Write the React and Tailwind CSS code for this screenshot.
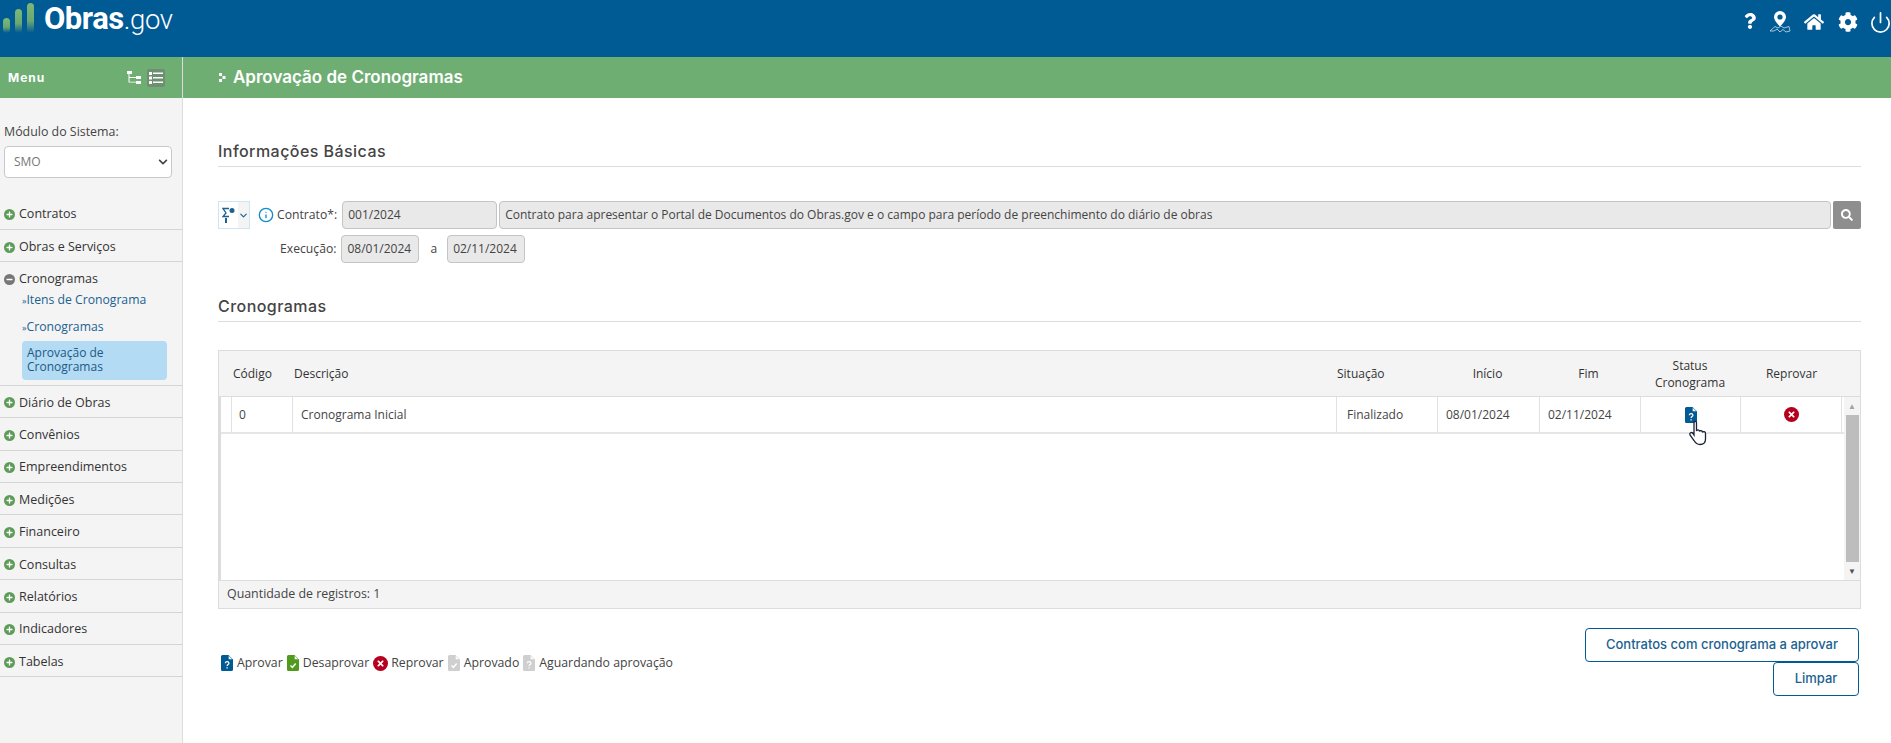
import { FaHome, FaCog, FaQuestion, FaChevronDown, FaSearch, FaTimes, FaPlus, FaMinus } from 'react-icons/fa';
import { Power, Info, ChevronDown } from 'lucide-react';

const openSans = { fontFamily: '"Open Sans", sans-serif' };

const menuTop = ['Contratos', 'Obras e Serviços'];
const menuBottom = ['Diário de Obras', 'Convênios', 'Empreendimentos', 'Medições', 'Financeiro', 'Consultas', 'Relatórios', 'Indicadores', 'Tabelas'];
const legend = [
  { label: 'Aprovar', type: 'doc', color: '#005a94', mark: '?' },
  { label: 'Desaprovar', type: 'doc', color: '#4f9a1f', mark: '✓' },
  { label: 'Reprovar', type: 'x' },
  { label: 'Aprovado', type: 'doc', color: '#cfcfcf', mark: '✓' },
  { label: 'Aguardando aprovação', type: 'doc', color: '#cfcfcf', mark: '?' },
];

function DocIcon({ color, mark, className }) {
  return (
    <svg viewBox="0 0 12 16" className={className}>
      <path d="M1.5 0H7.5L12 4.5V14.5A1.5 1.5 0 0 1 10.5 16H1.5A1.5 1.5 0 0 1 0 14.5V1.5A1.5 1.5 0 0 1 1.5 0Z" fill={color} />
      <path d="M7.7 0.8L11.2 4.3H7.7Z" fill="#fff" />
      {mark === '?' ? (
        <path d="M4.3 8.2C4.4 6.2 7.9 6.2 7.9 8.2C7.9 9.6 6.1 9.6 6.1 11M6.1 12.2V13.6" stroke="#fff" strokeWidth="1.3" fill="none" />
      ) : (
        <path d="M3.5 10.5L5.4 12.5L8.7 8.6" stroke="#fff" strokeWidth="1.5" fill="none" />
      )}
    </svg>
  );
}

function RejectIcon({ className }) {
  return (
    <span className={`inline-flex items-center justify-center rounded-full bg-[#b5001f] text-white ${className}`}>
      <FaTimes className="w-[9px] h-[9px]" />
    </span>
  );
}

function MenuItem({ label }) {
  return (
    <div className="h-[32.4px] pt-[3px] border-b border-[#d4d4d4] flex items-center pl-[4px] gap-[3px] text-[12.5px] text-[#333]">
      <span className="w-[11px] h-[11px] rounded-full flex items-center justify-center text-white bg-[#5d9c59]">
        <FaPlus className="w-[7px] h-[7px]" />
      </span>
      <span className="ml-[1px]">{label}</span>
    </div>
  );
}

function Field({ className, children }) {
  return (
    <div className={`h-[28px] bg-[#e9e9e9] border border-[#c4c4c4] rounded-[4px] flex items-center px-[5px] text-[12px] text-[#444] ${className}`}>
      {children}
    </div>
  );
}

function Cell({ className, children }) {
  return <div className={`flex items-center border-r border-[#e2e2e2] text-[12px] text-[#444] ${className}`}>{children}</div>;
}

function SectionTitle({ children, className }) {
  return (
    <div className={`border-b border-[#dcdcdc] h-[27px] text-[16px] leading-[23px] font-medium tracking-[0.45px] text-[#444] ${className}`} style={{ fontFamily: 'Inter, sans-serif' }}>
      {children}
    </div>
  );
}

export default function App() {
  return (
    <div className="h-[743px] bg-white flex flex-col overflow-hidden" style={openSans}>
      <header className="h-[57px] shrink-0 bg-[#005a94] flex justify-between">
        <div className="flex items-start pl-[3px] pt-[3px]">
          <svg width="32" height="30" viewBox="0 0 32 30">
            <defs>
              <linearGradient id="bar" x1="0" y1="0" x2="0" y2="1">
                <stop offset="0" stopColor="#7cb878" />
                <stop offset="0.6" stopColor="#6aa872" />
                <stop offset="1" stopColor="#005a94" />
              </linearGradient>
            </defs>
            <rect x="0" y="15" width="7" height="15" rx="3.5" fill="url(#bar)" />
            <rect x="12" y="6" width="7" height="24" rx="3.5" fill="url(#bar)" />
            <rect x="24" y="0" width="7" height="30" rx="3.5" fill="url(#bar)" />
          </svg>
          <div className="ml-[9px] -mt-[4px] leading-[40px] text-white" style={{ fontFamily: 'Roboto, sans-serif' }}>
            <span className="text-[31px] font-bold tracking-[-0.5px]">Obras</span>
            <span className="text-[27.5px] font-light tracking-[-0.3px]">.gov</span>
          </div>
        </div>
        <div className="flex items-start pt-[11px] text-white">
          <FaQuestion className="w-[12px] h-[18px] mt-[1px] mr-[13px]" />
          <svg width="22" height="22" viewBox="0 0 22 22" className="mr-[13px]">
            <path fillRule="evenodd" d="M11 0A6 6 0 0 0 5 6C5 10 11 15.5 11 15.5S17 10 17 6A6 6 0 0 0 11 0ZM11 3.4A2.6 2.6 0 1 1 11 8.6A2.6 2.6 0 0 1 11 3.4Z" fill="#fff" />
            <path d="M1 20L6 15.5L9 17L12 15L15 17L20 15.5L21 20L17 21L14 18.5L11 21L8 18L5 20Z" fill="none" stroke="#cfe0ea" strokeWidth="0.8" />
          </svg>
          <FaHome className="w-[20px] h-[20px] mt-[1px] mr-[14px]" />
          <FaCog className="w-[20px] h-[20px] mt-[1px] mr-[11px]" />
          <Power className="w-[23px] h-[23px] -mr-[1px]" strokeWidth={1.8} />
        </div>
      </header>

      <div className="flex flex-1 min-h-0">
        <aside className="w-[183px] shrink-0 bg-[#f4f4f4] border-r border-[#dcdcdc] flex flex-col">
          <div className="h-[41px] bg-[#6fae73] flex items-center justify-between pl-[8px] pr-[17px]">
            <span className="text-[12px] font-bold tracking-[1px] text-white" style={{ fontFamily: 'Inter, sans-serif' }}>Menu</span>
            <div className="flex items-center gap-[6px]">
              <svg width="14" height="13" viewBox="0 0 14 13" fill="#fff">
                <rect x="0" y="0" width="5" height="3" />
                <rect x="9" y="5" width="5" height="3" />
                <rect x="9" y="10" width="5" height="3" />
                <path d="M1.5 3V11.5H9V10.7H2.5V6.9H9V6.1H2.5V3Z" />
              </svg>
              <span className="w-[18px] h-[18px] rounded-[2px] bg-[#6f8f72] flex items-center justify-center">
                <svg width="14" height="12" viewBox="0 0 14 12" fill="#fff">
                  <rect x="0" y="0" width="3" height="3" />
                  <rect x="4" y="0.5" width="10" height="1.5" />
                  <rect x="0" y="4.5" width="3" height="3" />
                  <rect x="4" y="5" width="10" height="1.5" />
                  <rect x="0" y="9" width="3" height="3" />
                  <rect x="4" y="9.5" width="10" height="1.5" />
                </svg>
              </span>
            </div>
          </div>

          <div className="pt-[26px] px-[4px]">
            <div className="text-[12.4px] leading-[16px] text-[#444]">Módulo do Sistema:</div>
            <div className="mt-[6px] h-[32px] w-[168px] bg-white border border-[#c9c9c9] rounded-[4px] flex items-center justify-between pl-[9px] pr-[3px] text-[12px] text-[#777]">
              <span>SMO</span>
              <FaChevronDown className="w-[10px] h-[10px] text-[#444]" />
            </div>
          </div>

          <div className="mt-[19.5px]">
            {menuTop.map(label => <MenuItem key={label} label={label} />)}
            <div className="border-b border-[#d4d4d4] pb-[5px]">
              <div className="h-[32px] pt-[3px] flex items-center pl-[4px] gap-[3px] text-[12.5px] text-[#333]">
                <span className="w-[11px] h-[11px] rounded-full flex items-center justify-center text-white bg-[#777]">
                  <FaMinus className="w-[7px] h-[7px]" />
                </span>
                <span className="ml-[1px]">Cronogramas</span>
              </div>
              <div className="-mt-[5px] pl-[22px] text-[12.2px] text-[#1b6291]">
                <div className="leading-[22px]"><span className="text-[9px]">»</span>Itens de Cronograma</div>
                <div className="mt-[4px] leading-[22px]"><span className="text-[9px]">»</span>Cronogramas</div>
              </div>
              <div className="ml-[22px] mt-[1.5px] w-[145px] h-[39px] bg-[#b3dbf4] rounded-[4px] px-[5px] py-[5px] text-[12px] leading-[14px] text-[#1b5a85]">
                Aprovação de Cronogramas
              </div>
            </div>
            {menuBottom.map(label => <MenuItem key={label} label={label} />)}
          </div>
        </aside>

        <main className="flex-1 min-w-0 flex flex-col">
          <div className="h-[41px] shrink-0 bg-[#6fae73] flex items-center pl-[36px] gap-[7px] text-white">
            <svg width="7" height="9" viewBox="0 0 7 9" fill="#fff">
              <rect x="0" y="0" width="3" height="3" />
              <rect x="3.5" y="3" width="3" height="3" />
              <rect x="0" y="6" width="3" height="3" />
            </svg>
            <span className="text-[17px] font-semibold" style={{ fontFamily: 'Inter, sans-serif' }}>Aprovação de Cronogramas</span>
          </div>

          <div className="pl-[35px] pr-[30px] flex flex-col">
            <SectionTitle className="mt-[42px]">Informações Básicas</SectionTitle>

            <div className="mt-[34px] flex items-center h-[28px]">
              <div className="w-[32px] h-[28px] border border-[#cde6f5] flex">
                <div className="w-[21px] flex items-center justify-center">
                  <svg width="13" height="16" viewBox="0 0 13 16" fill="none" stroke="#1b6291" strokeWidth="1.3">
                    <path d="M7 1.5H1L4 6L1 9.5H7" />
                    <path d="M4 11V16" strokeWidth="2" />
                    <circle cx="10" cy="3.5" r="2.5" fill="#1b6291" stroke="none" />
                  </svg>
                </div>
                <div className="flex-1 bg-[#f4f4f4] flex items-center justify-center">
                  <ChevronDown className="w-[11px] h-[11px] text-[#1b6291]" strokeWidth={2.5} />
                </div>
              </div>
              <Info className="ml-[8px] w-[16px] h-[16px] text-[#0f8bcb]" strokeWidth={2} />
              <span className="ml-[3px] text-[12.2px] text-[#444]">Contrato*:</span>
              <Field className="ml-[5px] w-[155px]">001/2024</Field>
              <Field className="ml-[2px] flex-1">Contrato para apresentar o Portal de Documentos do Obras.gov e o campo para período de preenchimento do diário de obras</Field>
              <div className="ml-[2px] w-[28px] h-[28px] bg-[#8e8e8e] rounded-[2px] flex items-center justify-center">
                <FaSearch className="w-[12px] h-[12px] text-white" />
              </div>
            </div>

            <div className="mt-[6px] flex items-center h-[28px]">
              <span className="ml-[62px] text-[12.2px] text-[#444]">Execução:</span>
              <Field className="ml-[5px] w-[78px]">08/01/2024</Field>
              <span className="ml-[11px] mr-[10px] text-[12px] text-[#444]">a</span>
              <Field className="w-[78px]">02/11/2024</Field>
            </div>

            <SectionTitle className="mt-[32px]">Cronogramas</SectionTitle>

            <div className="mt-[28px] h-[259px] border border-[#dcdcdc] flex flex-col">
              <div className="h-[46px] shrink-0 bg-[#f4f4f4] border-b border-[#dcdcdc] flex text-[12px] text-[#333]">
                <div className="w-[13px]" />
                <div className="w-[60px] flex items-center pl-[1px]">Código</div>
                <div className="w-[1045px] flex items-center pl-[2px]">Descrição</div>
                <div className="w-[100px] flex items-center">Situação</div>
                <div className="w-[101px] flex items-center justify-center">Início</div>
                <div className="w-[101px] flex items-center justify-center">Fim</div>
                <div className="w-[102px] flex items-center justify-center text-center leading-[17px]">Status Cronograma</div>
                <div className="w-[101px] flex items-center justify-center">Reprovar</div>
              </div>

              <div className="flex-1 min-h-0 flex">
                <div className="flex-1 min-w-0 border-l-2 border-[#dcdcdc]">
                  <div className="h-[37px] border-b-2 border-[#e6e6e6] flex">
                    <Cell className="w-[11px]" />
                    <Cell className="w-[61px] pl-[7px]">0</Cell>
                    <Cell className="w-[1044px] pl-[8px]">Cronograma Inicial</Cell>
                    <Cell className="w-[101px] pl-[10px]">Finalizado</Cell>
                    <Cell className="w-[102px] pl-[8px]">08/01/2024</Cell>
                    <Cell className="w-[101px] pl-[8px]">02/11/2024</Cell>
                    <Cell className="w-[100px] justify-center"><DocIcon color="#005a94" mark="?" className="w-[12px] h-[16px]" /></Cell>
                    <Cell className="w-[101px] justify-center"><RejectIcon className="w-[15px] h-[15px]" /></Cell>
                  </div>
                </div>
                <div className="w-[16px] shrink-0 bg-[#f4f4f4] flex flex-col items-center">
                  <span className="h-[18px] flex items-center text-[#a3a3a3] text-[8px] leading-none">▲</span>
                  <div className="w-[13px] flex-1 bg-[#bdbdbd]" />
                  <span className="h-[18px] flex items-center text-[#505050] text-[8px] leading-none">▼</span>
                </div>
              </div>

              <div className="h-[28px] shrink-0 bg-[#f4f4f4] border-t border-[#dcdcdc] flex items-center pl-[8px] text-[12.4px] text-[#444]">
                Quantidade de registros: 1
              </div>
            </div>

            <div className="mt-[19px] flex justify-between">
              <div className="flex items-center gap-[4px] ml-[3px] mt-[27px] h-[16px] text-[12.3px] text-[#444]">
                {legend.map(item => (
                  <div key={item.label} className="flex items-center gap-[4px]">
                    {item.type === 'x'
                      ? <RejectIcon className="w-[15px] h-[15px] mr-[-1px]" />
                      : <DocIcon color={item.color} mark={item.mark} className="w-[12px] h-[16px]" />}
                    <span>{item.label}</span>
                  </div>
                ))}
              </div>
              <div className="flex flex-col items-end mr-[2px]">
                <button className="h-[34px] w-[274px] border border-[#005a94] rounded-[4px] text-[13px] font-medium text-[#1b6291]" style={{ fontFamily: 'Inter, sans-serif' }}>
                  Contratos com cronograma a aprovar
                </button>
                <button className="h-[34px] w-[86px] border border-[#005a94] rounded-[4px] text-[13px] font-medium text-[#1b6291]" style={{ fontFamily: 'Inter, sans-serif' }}>
                  Limpar
                </button>
              </div>
            </div>
          </div>
        </main>
      </div>

      <svg width="22" height="26" viewBox="0 0 22 26" className="absolute left-[1688px] top-[420px]">
        <path d="M6 2.5C6 1 8.5 1 8.5 2.5V11C9 9.5 11.5 9.5 11.5 11.5C12 10 14.5 10.5 14.5 12.5C15 11 17.5 11.5 17.5 13.5V19C17.5 22.5 15.5 24.5 12 24.5C9 24.5 7.5 23 6 20.5L2 15C1 13 3.5 11.5 5 13.5L6 15Z" fill="#fff" stroke="#1a2238" strokeWidth="1.3" />
      </svg>
    </div>
  );
}
